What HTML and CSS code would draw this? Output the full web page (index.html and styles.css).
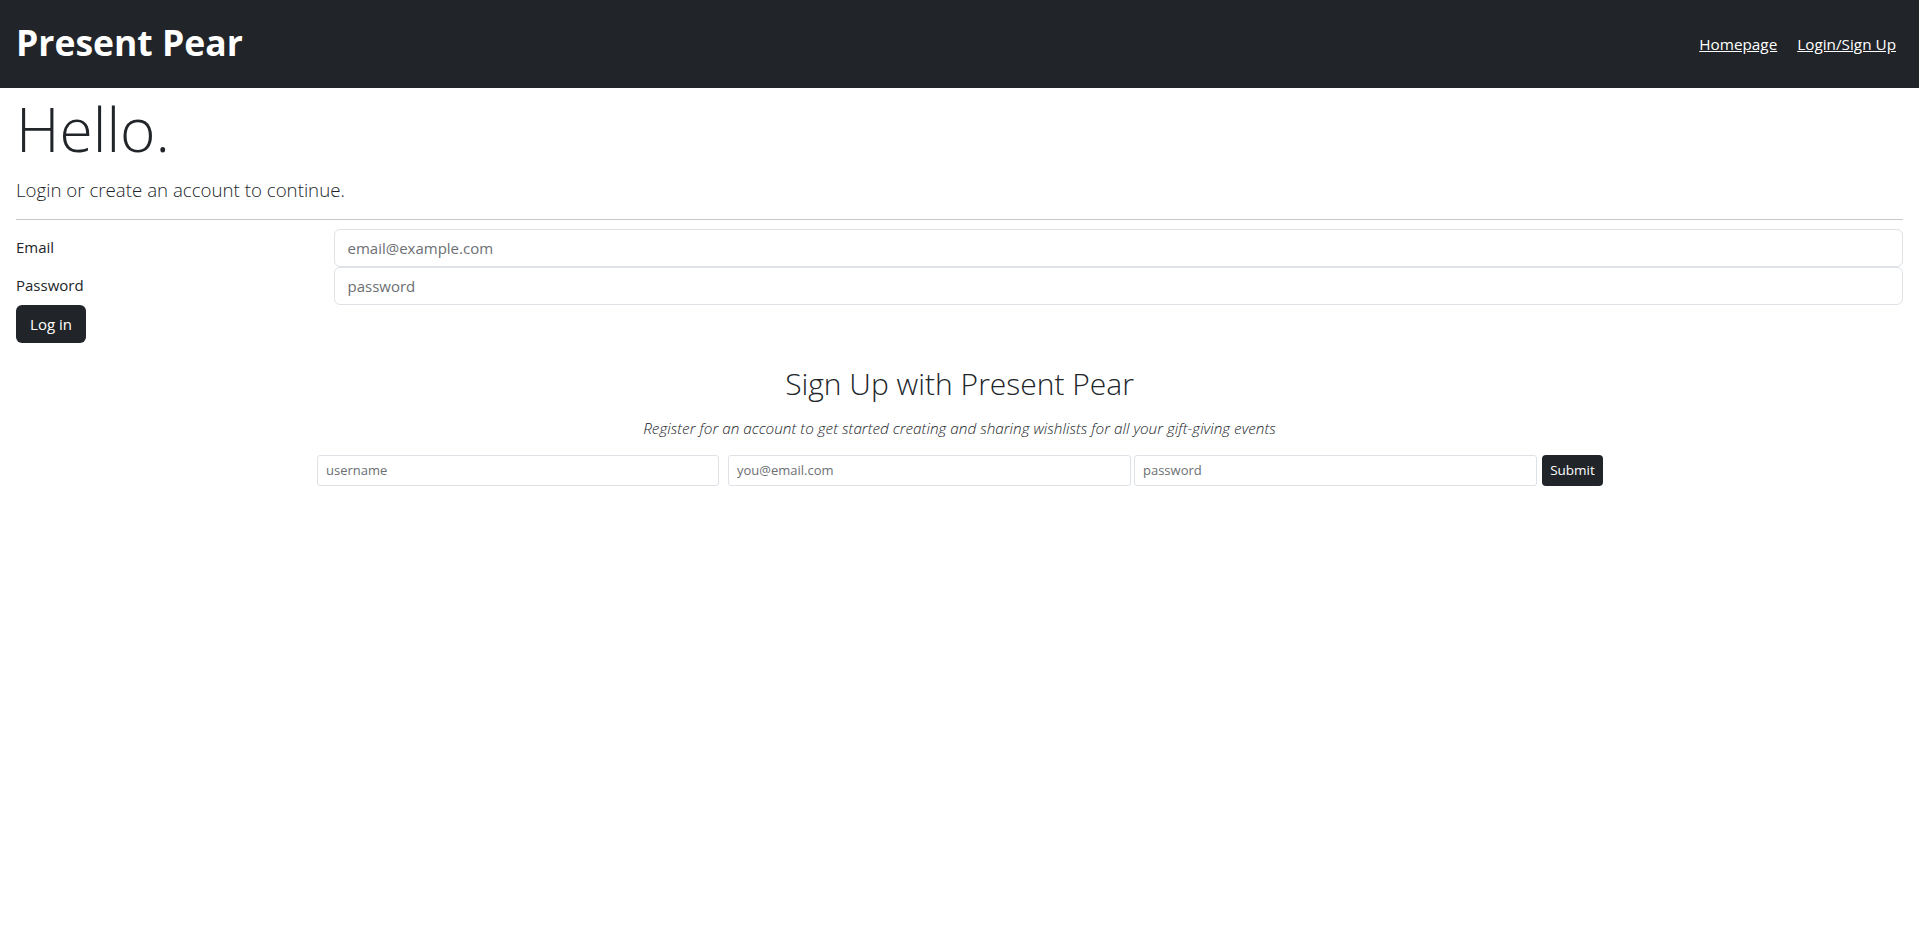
FILE: index.html
```html
<!DOCTYPE html>
<html lang="en">
<head>
<meta charset="utf-8">
<title>Present Pear</title>
<link rel="stylesheet" href="styles.css">
</head>
<body>
<nav class="navbar">
  <a class="brand" href="#">Present Pear</a>
  <div class="nav-links">
    <a href="#">Homepage</a>
    <a href="#">Login/Sign Up</a>
  </div>
</nav>
<main class="page">
  <h1 class="hello">Hello.</h1>
  <p class="lead">Login or create an account to continue.</p>
  <hr class="divider">
  <form class="login-form">
    <div class="form-row">
      <label class="form-label">Email</label>
      <input class="form-control" type="email" placeholder="email@example.com">
    </div>
    <div class="form-row">
      <label class="form-label">Password</label>
      <input class="form-control" type="password" placeholder="password">
    </div>
    <button class="btn-dark" type="button">Log in</button>
  </form>
  <section class="signup">
    <h2 class="signup-title">Sign Up with Present Pear</h2>
    <p class="signup-sub">Register for an account to get started creating and sharing wishlists for all your gift-giving events</p>
    <form class="signup-form">
      <input class="input-sm input-user" type="text" placeholder="username">
      <input class="input-sm input-email" type="email" placeholder="you@email.com">
      <input class="input-sm input-pass" type="password" placeholder="password">
      <button class="btn-sm" type="button">Submit</button>
    </form>
  </section>
</main>
</body>
</html>
```
FILE: styles.css
```css
* { box-sizing: border-box; }
body {
  margin: 0;
  font-family: "Open Sans", "Noto Sans", sans-serif;
  color: #212529;
  background: #fff;
  font-size: 16px;
  line-height: 1.5;
}
.navbar {
  height: 88px;
  background: #212529;
  display: flex;
  align-items: center;
  justify-content: space-between;
  padding: 0 23px 0 16px;
}
.brand {
  color: #fff;
  text-decoration: none;
  font-size: 35.5px;
  font-weight: 700;
  line-height: 1.2;
  margin-top: -4px;
}
.nav-links {
  display: flex;
  gap: 20px;
}
.nav-links a {
  color: #fff;
  font-size: 15.3px;
}
.page { padding: 0 16px; }
.hello {
  margin: 0;
  font-size: 60.5px;
  font-weight: 300;
  line-height: 1.2;
  margin-top: 5px;
}
.lead {
  margin: 10px 0 0;
  font-size: 18.7px;
  font-weight: 300;
  line-height: 1.5;
}
.divider {
  margin: 15px 0 9px;
  border: 0;
  border-top: 1px solid #c8c9ca;
}
.form-row {
  display: flex;
  gap: 24px;
  align-items: center;
}
.form-label {
  width: calc((100% + 24px) / 6 - 24px);
  flex: none;
  font-size: 15px;
}
.form-control {
  flex: 1;
  height: 38px;
  border: 1px solid #dee2e6;
  border-radius: 6px;
  padding: 6px 12px;
  font-family: inherit;
  font-size: 15px;
  color: #212529;
}
.form-control::placeholder { color: #6c6f73; }
.btn-dark {
  display: block;
  height: 38px;
  width: 70px;
  background: #212529;
  color: #fff;
  border: 0;
  border-radius: 6px;
  font-family: inherit;
  font-size: 15px;
  padding: 0;
}
.signup { text-align: center; margin-top: 23px; }
.signup-title {
  margin: 0;
  font-size: 30px;
  font-weight: 300;
  line-height: 1.2;
}
.signup-sub {
  margin: 15px 0 0;
  font-style: italic;
  font-weight: 300;
  font-size: 15.3px;
}
.signup-form {
  display: flex;
  justify-content: center;
  margin-top: 15px;
  padding-left: 1px;
}
.input-sm {
  width: 403px;
  height: 31px;
  border: 1px solid #dee2e6;
  border-radius: 3px;
  padding: 4px 8px;
  font-family: inherit;
  font-size: 13px;
  color: #212529;
}
.input-sm::placeholder { color: #6c6f73; }
.input-user { width: 402px; margin-right: 9px; }
.input-email { margin-right: 3px; }
.input-pass { margin-right: 5px; }
.btn-sm {
  width: 61px;
  height: 31px;
  background: #212529;
  color: #fff;
  border: 0;
  border-radius: 4px;
  font-family: inherit;
  font-size: 13.5px;
  padding: 0;
}
```
